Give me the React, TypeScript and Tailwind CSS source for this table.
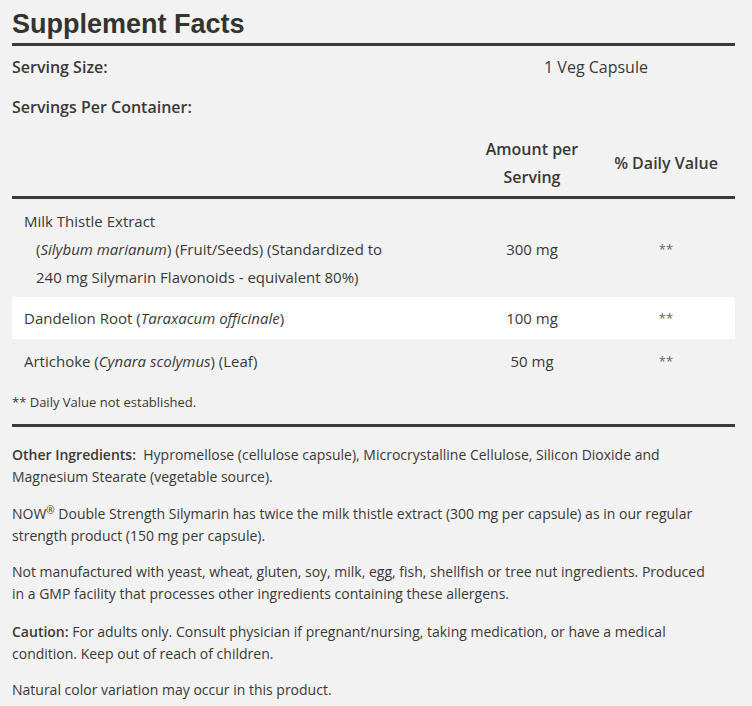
export default function App() {
  const font = { fontFamily: '"Open Sans", "Noto Sans", sans-serif' };
  return (
    <div className="min-h-[706px] w-[752px] bg-[#f2f2f2] text-[#3a3936]" style={font}>
      <div className="pl-[12px] pr-[17px]">
        <h1 className="pt-[8px] text-[27px] font-bold leading-[32px] text-[#34332f]" style={{ fontFamily: '"Liberation Sans", Arial, sans-serif' }}>
          Supplement Facts
        </h1>
        <div className="mt-[3px] h-[3px] bg-[#3b3a36]" />
        <div className="flex h-[40px] items-center pt-[2px] text-[16px] font-semibold">
          <div className="w-[455px]">Serving Size:</div>
          <div className="w-[260px] pr-[2px] text-center font-normal">1 Veg Capsule</div>
        </div>
        <div className="flex h-[40px] items-center pt-[2px] text-[16px] font-semibold">
          <div className="w-[455px]">Servings Per Container:</div>
        </div>
        <div className="grid h-[70px] grid-cols-[455px_130px_1fr] items-center pt-[3px] text-[16px] font-semibold leading-[28px]">
          <div />
          <div className="text-center">Amount per<br />Serving</div>
          <div className="text-center">% Daily Value</div>
        </div>
        <div className="h-[3px] bg-[#3b3a36]" />
        <div className="grid grid-cols-[455px_130px_1fr] items-center pt-[8px] pb-[6px] text-[15px] leading-[28px]">
          <div className="pl-[12px]">
            <div>Milk Thistle Extract</div>
            <div className="pl-[12px]">
              (<i>Silybum marianum</i>) (Fruit/Seeds) (Standardized to<br />240 mg Silymarin Flavonoids - equivalent 80%)
            </div>
          </div>
          <div className="text-center">300 mg</div>
          <div className="text-center text-[13px] text-[#666]">**</div>
        </div>
        <div className="grid grid-cols-[455px_130px_1fr] items-center bg-white py-[7px] text-[15px] leading-[28px]">
          <div className="pl-[12px]">Dandelion Root (<i>Taraxacum officinale</i>)</div>
          <div className="text-center">100 mg</div>
          <div className="text-center text-[13px] text-[#666]">**</div>
        </div>
        <div className="grid grid-cols-[455px_130px_1fr] items-center pt-[8px] pb-[6px] text-[15px] leading-[28px]">
          <div className="pl-[12px]">Artichoke (<i>Cynara scolymus</i>) (Leaf)</div>
          <div className="text-center">50 mg</div>
          <div className="text-center text-[13px] text-[#666]">**</div>
        </div>
        <div className="pt-[11px] pb-[12px] text-[13px] leading-[20px]">** Daily Value not established.</div>
        <div className="h-[3px] bg-[#3b3a36]" />
        <div className="pt-[17px] text-[14px] leading-[22px]">
          <p><b className="font-semibold">Other Ingredients:</b>&nbsp; Hypromellose (cellulose capsule), Microcrystalline Cellulose, Silicon Dioxide and<br />Magnesium Stearate (vegetable source).</p>
          <p className="mt-[15px]">NOW<sup className="text-[10px] leading-none">®</sup> Double Strength Silymarin has twice the milk thistle extract (300 mg per capsule) as in our regular<br />strength product (150 mg per capsule).</p>
          <p className="mt-[14px]">Not manufactured with yeast, wheat, gluten, soy, milk, egg, fish, shellfish or tree nut ingredients. Produced<br />in a GMP facility that processes other ingredients containing these allergens.</p>
          <p className="mt-[16px]"><b className="font-semibold">Caution:</b> For adults only. Consult physician if pregnant/nursing, taking medication, or have a medical<br />condition. Keep out of reach of children.</p>
          <p className="mt-[14px]">Natural color variation may occur in this product.</p>
        </div>
      </div>
    </div>
  );
}
